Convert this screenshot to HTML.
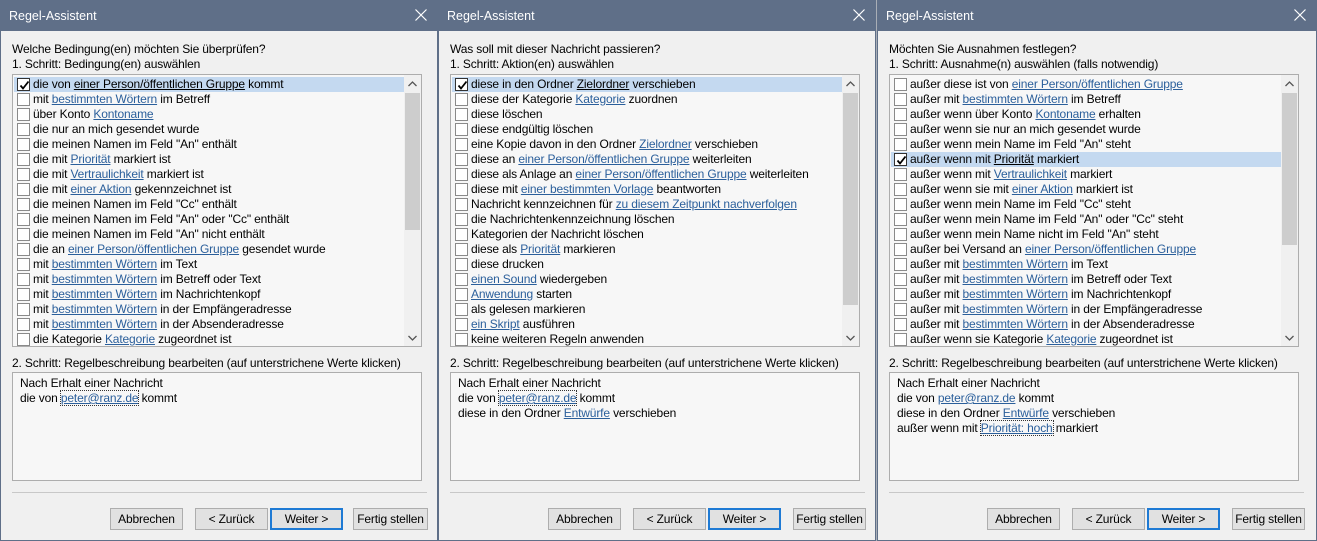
<!DOCTYPE html>
<html><head><meta charset="utf-8"><style>
*{margin:0;padding:0;box-sizing:border-box}
body{width:1317px;height:541px;background:#a9aeb6;font-family:"Liberation Sans",sans-serif;font-size:12px;letter-spacing:-0.15px;color:#000;position:relative;overflow:hidden}
.p{position:absolute;top:0;width:438px;height:541px;background:#f0f0f0;border:1px solid #5f6f88;border-top:none}
.tb{position:absolute;left:0;top:0;right:0;height:31px;background:#5f6f88;color:#fff;font-size:12.5px;padding:9px 0 0 8px;letter-spacing:0}
.x{position:absolute;right:10px;top:9px;width:12px;height:12px}
.t{position:absolute;left:11px;white-space:nowrap}
.lb{position:absolute;left:11px;top:74px;width:410px;height:273px;background:#f7f7f7;border:1px solid #adadad;overflow:hidden}
.r{position:absolute;left:1px;width:391px;height:15px;line-height:15px;white-space:nowrap;padding-left:19px}
.r.s{background:#c4d9f0}
.cb{position:absolute;left:3px;top:1px;width:13px;height:13px;border:1px solid #8a8a8a;background:#fff}
.s .cb{border-color:#333}
.cb svg{position:absolute;left:1px;top:1px}
a{color:#2b5f9b;text-decoration:underline}
.s a{color:#000}
.sb{position:absolute;right:0;top:0;width:17px;height:271px;background:#f0f0f0}
.th{position:absolute;left:1px;width:15px;background:#cdcdcd}
.ar{position:absolute;left:4px;width:9px;height:6px}
.db{position:absolute;left:11px;top:372px;width:410px;height:109px;background:#f7f7f7;border:1px solid #adadad;padding:3px 0 0 7px;line-height:15px}
.db a{color:#2b5f9b}
.dot{outline:1px dotted #333}
.sep{position:absolute;left:11px;top:492px;width:415px;height:1px;background:#c8c8c8}
.b{position:absolute;top:508px;width:73px;height:22px;border:1px solid #adadad;background:#e1e1e1;text-align:center;line-height:20px}
.b.d{border:2px solid #1e7ad4;line-height:18px}
</style></head><body>
<svg width="0" height="0" style="position:absolute"><defs>
<symbol id="ck" viewBox="0 0 11 11"><path d="M1.5 5.5 L4 8.5 L9.5 1.5" stroke="#000" stroke-width="1.8" fill="none"/></symbol>
<symbol id="xx" viewBox="0 0 12 12"><path d="M0.5 0.5 L11.5 11.5 M11.5 0.5 L0.5 11.5" stroke="#fff" stroke-width="1.2"/></symbol>
<symbol id="up" viewBox="0 0 9 6"><path d="M0.5 5 L4.5 1 L8.5 5" stroke="#555" stroke-width="1.3" fill="none"/></symbol>
<symbol id="dn" viewBox="0 0 9 6"><path d="M0.5 1 L4.5 5 L8.5 1" stroke="#555" stroke-width="1.3" fill="none"/></symbol>
</defs></svg>

<div class="p" style="left:0">
<div class="tb">Regel-Assistent<svg class="x"><use href="#xx"/></svg></div>
<div class="t" style="top:42px">Welche Bedingung(en) möchten Sie überprüfen?</div>
<div class="t" style="top:57px">1. Schritt: Bedingung(en) auswählen</div>
<div class="lb">
<div class="r s" style="top:2px"><span class="cb"><svg width="11" height="11"><use href="#ck"/></svg></span>die von <a>einer Person/öffentlichen Gruppe</a> kommt</div>
<div class="r" style="top:17px"><span class="cb"></span>mit <a>bestimmten Wörtern</a> im Betreff</div>
<div class="r" style="top:32px"><span class="cb"></span>über Konto <a>Kontoname</a></div>
<div class="r" style="top:47px"><span class="cb"></span>die nur an mich gesendet wurde</div>
<div class="r" style="top:62px"><span class="cb"></span>die meinen Namen im Feld "An" enthält</div>
<div class="r" style="top:77px"><span class="cb"></span>die mit <a>Priorität</a> markiert ist</div>
<div class="r" style="top:92px"><span class="cb"></span>die mit <a>Vertraulichkeit</a> markiert ist</div>
<div class="r" style="top:107px"><span class="cb"></span>die mit <a>einer Aktion</a> gekennzeichnet ist</div>
<div class="r" style="top:122px"><span class="cb"></span>die meinen Namen im Feld "Cc" enthält</div>
<div class="r" style="top:137px"><span class="cb"></span>die meinen Namen im Feld "An" oder "Cc" enthält</div>
<div class="r" style="top:152px"><span class="cb"></span>die meinen Namen im Feld "An" nicht enthält</div>
<div class="r" style="top:167px"><span class="cb"></span>die an <a>einer Person/öffentlichen Gruppe</a> gesendet wurde</div>
<div class="r" style="top:182px"><span class="cb"></span>mit <a>bestimmten Wörtern</a> im Text</div>
<div class="r" style="top:197px"><span class="cb"></span>mit <a>bestimmten Wörtern</a> im Betreff oder Text</div>
<div class="r" style="top:212px"><span class="cb"></span>mit <a>bestimmten Wörtern</a> im Nachrichtenkopf</div>
<div class="r" style="top:227px"><span class="cb"></span>mit <a>bestimmten Wörtern</a> in der Empfängeradresse</div>
<div class="r" style="top:242px"><span class="cb"></span>mit <a>bestimmten Wörtern</a> in der Absenderadresse</div>
<div class="r" style="top:257px"><span class="cb"></span>die Kategorie <a>Kategorie</a> zugeordnet ist</div>
<div class="sb"><svg class="ar" style="top:6px"><use href="#up"/></svg><div class="th" style="top:18px;height:137px"></div><svg class="ar" style="top:260px"><use href="#dn"/></svg></div>
</div>
<div class="t" style="top:356px">2. Schritt: Regelbeschreibung bearbeiten (auf unterstrichene Werte klicken)</div>
<div class="db">Nach Erhalt einer Nachricht<br>die von <a class="dot">peter@ranz.de</a> kommt</div>
<div class="sep"></div>
<div class="b" style="left:109px">Abbrechen</div>
<div class="b" style="left:194px">&lt; Zurück</div>
<div class="b d" style="left:269px">Weiter &gt;</div>
<div class="b" style="left:352px;width:75px">Fertig stellen</div>
</div>

<div class="p" style="left:438px">
<div class="tb">Regel-Assistent<svg class="x"><use href="#xx"/></svg></div>
<div class="t" style="top:42px">Was soll mit dieser Nachricht passieren?</div>
<div class="t" style="top:57px">1. Schritt: Aktion(en) auswählen</div>
<div class="lb">
<div class="r s" style="top:2px"><span class="cb"><svg width="11" height="11"><use href="#ck"/></svg></span>diese in den Ordner <a>Zielordner</a> verschieben</div>
<div class="r" style="top:17px"><span class="cb"></span>diese der Kategorie <a>Kategorie</a> zuordnen</div>
<div class="r" style="top:32px"><span class="cb"></span>diese löschen</div>
<div class="r" style="top:47px"><span class="cb"></span>diese endgültig löschen</div>
<div class="r" style="top:62px"><span class="cb"></span>eine Kopie davon in den Ordner <a>Zielordner</a> verschieben</div>
<div class="r" style="top:77px"><span class="cb"></span>diese an <a>einer Person/öffentlichen Gruppe</a> weiterleiten</div>
<div class="r" style="top:92px"><span class="cb"></span>diese als Anlage an <a>einer Person/öffentlichen Gruppe</a> weiterleiten</div>
<div class="r" style="top:107px"><span class="cb"></span>diese mit <a>einer bestimmten Vorlage</a> beantworten</div>
<div class="r" style="top:122px"><span class="cb"></span>Nachricht kennzeichnen für <a>zu diesem Zeitpunkt nachverfolgen</a></div>
<div class="r" style="top:137px"><span class="cb"></span>die Nachrichtenkennzeichnung löschen</div>
<div class="r" style="top:152px"><span class="cb"></span>Kategorien der Nachricht löschen</div>
<div class="r" style="top:167px"><span class="cb"></span>diese als <a>Priorität</a> markieren</div>
<div class="r" style="top:182px"><span class="cb"></span>diese drucken</div>
<div class="r" style="top:197px"><span class="cb"></span><a>einen Sound</a> wiedergeben</div>
<div class="r" style="top:212px"><span class="cb"></span><a>Anwendung</a> starten</div>
<div class="r" style="top:227px"><span class="cb"></span>als gelesen markieren</div>
<div class="r" style="top:242px"><span class="cb"></span><a>ein Skript</a> ausführen</div>
<div class="r" style="top:257px"><span class="cb"></span>keine weiteren Regeln anwenden</div>
<div class="sb"><svg class="ar" style="top:6px"><use href="#up"/></svg><div class="th" style="top:18px;height:212px"></div><svg class="ar" style="top:260px"><use href="#dn"/></svg></div>
</div>
<div class="t" style="top:356px">2. Schritt: Regelbeschreibung bearbeiten (auf unterstrichene Werte klicken)</div>
<div class="db">Nach Erhalt einer Nachricht<br>die von <a class="dot">peter@ranz.de</a> kommt<br>diese in den Ordner <a>Entwürfe</a> verschieben</div>
<div class="sep"></div>
<div class="b" style="left:109px">Abbrechen</div>
<div class="b" style="left:194px">&lt; Zurück</div>
<div class="b d" style="left:269px">Weiter &gt;</div>
<div class="b" style="left:354px;width:73px">Fertig stellen</div>
</div>

<div class="p" style="left:877px;width:440px">
<div class="tb">Regel-Assistent<svg class="x"><use href="#xx"/></svg></div>
<div class="t" style="top:42px">Möchten Sie Ausnahmen festlegen?</div>
<div class="t" style="top:57px">1. Schritt: Ausnahme(n) auswählen (falls notwendig)</div>
<div class="lb">
<div class="r" style="top:2px"><span class="cb"></span>außer diese ist von <a>einer Person/öffentlichen Gruppe</a></div>
<div class="r" style="top:17px"><span class="cb"></span>außer mit <a>bestimmten Wörtern</a> im Betreff</div>
<div class="r" style="top:32px"><span class="cb"></span>außer wenn über Konto <a>Kontoname</a> erhalten</div>
<div class="r" style="top:47px"><span class="cb"></span>außer wenn sie nur an mich gesendet wurde</div>
<div class="r" style="top:62px"><span class="cb"></span>außer wenn mein Name im Feld "An" steht</div>
<div class="r s" style="top:77px"><span class="cb"><svg width="11" height="11"><use href="#ck"/></svg></span>außer wenn mit <a>Priorität</a> markiert</div>
<div class="r" style="top:92px"><span class="cb"></span>außer wenn mit <a>Vertraulichkeit</a> markiert</div>
<div class="r" style="top:107px"><span class="cb"></span>außer wenn sie mit <a>einer Aktion</a> markiert ist</div>
<div class="r" style="top:122px"><span class="cb"></span>außer wenn mein Name im Feld "Cc" steht</div>
<div class="r" style="top:137px"><span class="cb"></span>außer wenn mein Name im Feld "An" oder "Cc" steht</div>
<div class="r" style="top:152px"><span class="cb"></span>außer wenn mein Name nicht im Feld "An" steht</div>
<div class="r" style="top:167px"><span class="cb"></span>außer bei Versand an <a>einer Person/öffentlichen Gruppe</a></div>
<div class="r" style="top:182px"><span class="cb"></span>außer mit <a>bestimmten Wörtern</a> im Text</div>
<div class="r" style="top:197px"><span class="cb"></span>außer mit <a>bestimmten Wörtern</a> im Betreff oder Text</div>
<div class="r" style="top:212px"><span class="cb"></span>außer mit <a>bestimmten Wörtern</a> im Nachrichtenkopf</div>
<div class="r" style="top:227px"><span class="cb"></span>außer mit <a>bestimmten Wörtern</a> in der Empfängeradresse</div>
<div class="r" style="top:242px"><span class="cb"></span>außer mit <a>bestimmten Wörtern</a> in der Absenderadresse</div>
<div class="r" style="top:257px"><span class="cb"></span>außer wenn sie Kategorie <a>Kategorie</a> zugeordnet ist</div>
<div class="sb"><svg class="ar" style="top:6px"><use href="#up"/></svg><div class="th" style="top:18px;height:152px"></div><svg class="ar" style="top:260px"><use href="#dn"/></svg></div>
</div>
<div class="t" style="top:356px">2. Schritt: Regelbeschreibung bearbeiten (auf unterstrichene Werte klicken)</div>
<div class="db">Nach Erhalt einer Nachricht<br>die von <a>peter@ranz.de</a> kommt<br>diese in den Ordner <a>Entwürfe</a> verschieben<br>außer wenn mit <a class="dot">Priorität: hoch</a> markiert</div>
<div class="sep"></div>
<div class="b" style="left:109px">Abbrechen</div>
<div class="b" style="left:194px">&lt; Zurück</div>
<div class="b d" style="left:269px">Weiter &gt;</div>
<div class="b" style="left:354px;width:73px">Fertig stellen</div>
</div>
</body></html>
